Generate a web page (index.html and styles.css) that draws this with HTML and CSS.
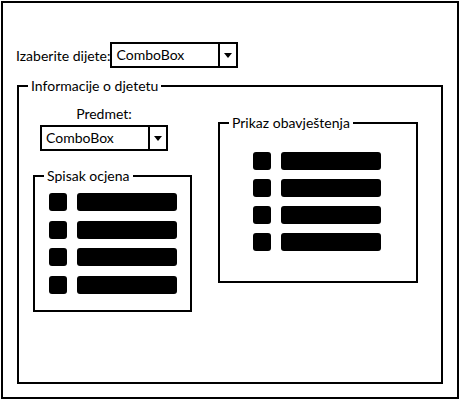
FILE: index.html
```html
<!DOCTYPE html>
<html lang="bs">
<head>
	<meta charset="UTF-8">
	<meta name="viewport" content="width=device-width, initial-scale=1.0">
	<title>Informacije o djetetu</title>

	<link rel="stylesheet" href="styles.css">

</head>
<body>

	<div class="window">

		<div class="picker">
			<label class="picker-label">Izaberite dijete:</label>
			<div class="combo">
				<span class="combo-text">ComboBox</span>
				<span class="combo-arrow"></span>
			</div>
		</div>

		<fieldset class="group group-main">
			<legend>Informacije o djetetu</legend>
			<div class="main-body">

				<div class="col-left">
					<div class="subject">
						<div class="subject-label">Predmet:</div>
						<div class="combo">
							<span class="combo-text">ComboBox</span>
							<span class="combo-arrow"></span>
						</div>
					</div>

					<fieldset class="group group-grades">
						<legend>Spisak ocjena</legend>
						<ul class="list">
							<li class="list-row"><span class="list-icon"></span><span class="list-bar"></span></li>
							<li class="list-row"><span class="list-icon"></span><span class="list-bar"></span></li>
							<li class="list-row"><span class="list-icon"></span><span class="list-bar"></span></li>
							<li class="list-row"><span class="list-icon"></span><span class="list-bar"></span></li>
						</ul>
					</fieldset>
				</div>

				<fieldset class="group group-notices">
					<legend>Prikaz obavještenja</legend>
					<ul class="list">
						<li class="list-row"><span class="list-icon"></span><span class="list-bar"></span></li>
						<li class="list-row"><span class="list-icon"></span><span class="list-bar"></span></li>
						<li class="list-row"><span class="list-icon"></span><span class="list-bar"></span></li>
						<li class="list-row"><span class="list-icon"></span><span class="list-bar"></span></li>
					</ul>
				</fieldset>

			</div>
		</fieldset>

	</div>

</body>
</html>
```

FILE: styles.css
```css
body {
	margin: 0;
	font-family: Lato, "Open Sans", sans-serif;
	font-size: 14px;
	color: #000;
	background-color: #fff;
}

.window {
	margin: 1px;
	width: 458px;
	height: 398px;
	box-sizing: border-box;
	border: 2px solid #000;
	padding: 39px 14px 0;
}

/* top row */
.picker {
	display: flex;
	align-items: center;
	height: 26px;
}
.picker-label {
	margin-left: -1px;
}

.combo {
	display: flex;
	width: 128px;
	height: 26px;
	box-sizing: border-box;
	border: 2px solid #000;
	background-color: #fff;
}
.combo-text {
	flex: 1;
	padding-left: 4px;
	line-height: 22px;
}
.combo-arrow {
	width: 16px;
	border-left: 2px solid #000;
	display: flex;
	align-items: center;
	justify-content: center;
}
.combo-arrow::before {
	content: "";
	border-left: 4px solid transparent;
	border-right: 4px solid transparent;
	border-top: 5px solid #000;
}

/* group boxes */
.group {
	margin: 0;
	padding: 0;
	min-width: 0;
	border: 2px solid #000;
	box-sizing: border-box;
}
.group > legend {
	margin-left: 9px;
	padding: 0 3px;
	line-height: 16px;
}

.group-main {
	margin-top: 10px;
	width: 426px;
	height: 306px;
}
.main-body {
	display: flex;
	align-items: flex-start;
	padding: 12px 0 0 14px;
}

.col-left {
	width: 159px;
}
.subject {
	margin-left: 7px;
	width: 128px;
	text-align: center;
}
.subject-label {
	line-height: 16px;
	margin-bottom: 3px;
}
.subject .combo {
	text-align: left;
}

.group-grades {
	margin-top: 17px;
	width: 159px;
}
.group-grades .list {
	padding: 9px 13px 16px 14px;
	gap: 9.5px;
}

.group-notices {
	margin: 9px 0 0 26px;
	width: 200px;
}
.group-notices .list {
	padding: 21px 0 30px 33px;
	gap: 9px;
}

/* placeholder list */
.list {
	margin: 0;
	list-style: none;
	display: flex;
	flex-direction: column;
}
.list-row {
	display: flex;
	gap: 10px;
}
.list-icon {
	width: 18px;
	height: 18px;
	border-radius: 3px;
	background-color: #000;
}
.list-bar {
	width: 100px;
	height: 18px;
	border-radius: 3px;
	background-color: #000;
}
```
